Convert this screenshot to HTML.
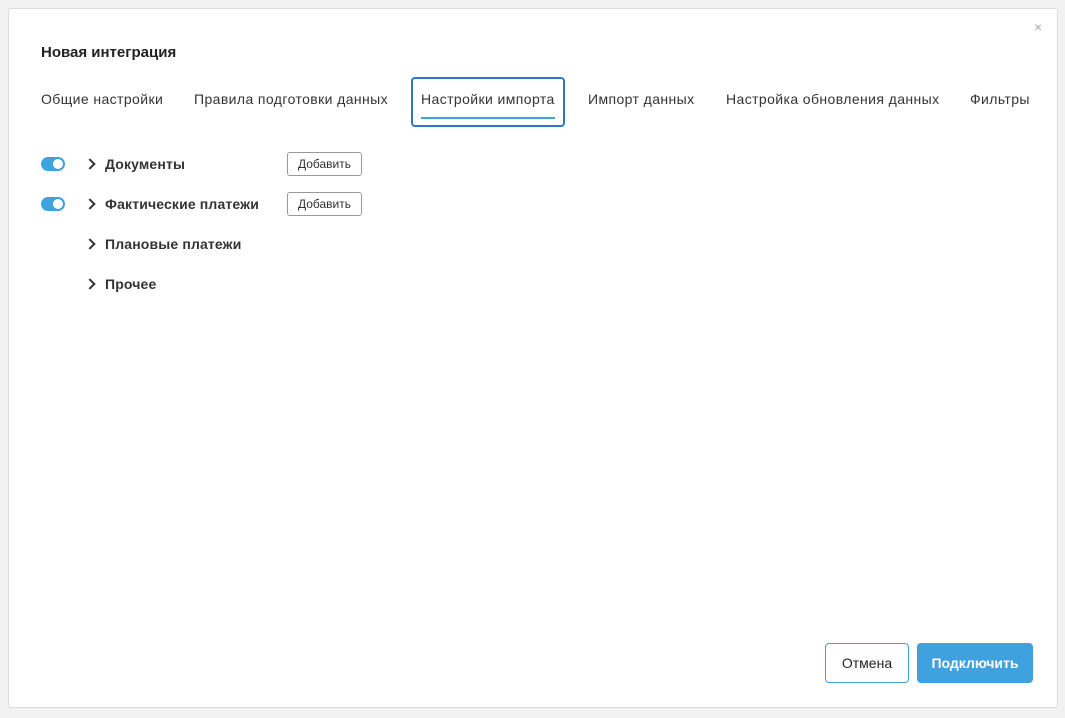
<!DOCTYPE html>
<html><head><meta charset="utf-8"><style>
body{margin:0;width:1065px;height:718px;background:#f2f2f2;font-family:"Liberation Sans","DejaVu Sans",sans-serif;position:relative;overflow:hidden;color:#333}
.m{position:absolute;left:8px;top:8px;width:1048px;height:698px;background:#fff;border:1px solid #dcdcdc;border-radius:3px}
.a{position:absolute;white-space:nowrap}
.tab{position:absolute;top:91px;font-size:14px;color:#333;letter-spacing:0.4px}
.tg{position:absolute;left:41px;width:24px;height:14px;border-radius:7px;background:#3fa2df}
.tg:after{content:"";position:absolute;right:2px;top:2px;width:10px;height:10px;border-radius:50%;background:#fff}
.lbl{position:absolute;left:105px;font-size:14px;font-weight:bold;color:#333;letter-spacing:0.15px}
.chev{position:absolute;left:86px;width:6px;height:6px;border-right:2px solid #333;border-top:2px solid #333;transform:rotate(45deg)}
.btn{position:absolute;left:287px;width:73px;height:22px;border:1px solid #999;border-radius:3px;font-size:12px;text-align:center;line-height:22px;color:#333}
</style></head><body>
<div class="m"></div>
<div class="a" style="left:1034px;top:19px;font-size:14px;color:#aaa">×</div>
<div class="a" style="left:41px;top:44px;font-size:15px;font-weight:bold;color:#222">Новая интеграция</div>
<div class="tab" style="left:41px">Общие настройки</div>
<div class="tab" style="left:194px">Правила подготовки данных</div>
<div style="position:absolute;left:411px;top:77px;width:150px;height:46px;border:2px solid #2f77c4;border-radius:4px"></div>
<div class="tab" style="left:421px">Настройки импорта</div>
<div style="position:absolute;left:421px;top:117px;width:134px;height:2px;background:#3fa2df"></div>
<div class="tab" style="left:588px">Импорт данных</div>
<div class="tab" style="left:726px">Настройка обновления данных</div>
<div class="tab" style="left:970px">Фильтры</div>

<div class="tg" style="top:157px"></div><div class="chev" style="top:160px"></div><div class="lbl" style="top:156px">Документы</div><div class="btn" style="top:152px">Добавить</div>
<div class="tg" style="top:197px"></div><div class="chev" style="top:200px"></div><div class="lbl" style="top:196px">Фактические платежи</div><div class="btn" style="top:192px">Добавить</div>
<div class="chev" style="top:240px"></div><div class="lbl" style="top:236px">Плановые платежи</div>
<div class="chev" style="top:280px"></div><div class="lbl" style="top:276px">Прочее</div>

<div style="position:absolute;left:825px;top:643px;width:82px;height:38px;border:1px solid #3fa2df;border-radius:4px;font-size:14px;text-align:center;line-height:38px;color:#222">Отмена</div>
<div style="position:absolute;left:917px;top:643px;width:116px;height:40px;background:#3fa2df;border-radius:4px;font-size:14px;font-weight:bold;text-align:center;line-height:40px;color:#fff">Подключить</div>
</body></html>
